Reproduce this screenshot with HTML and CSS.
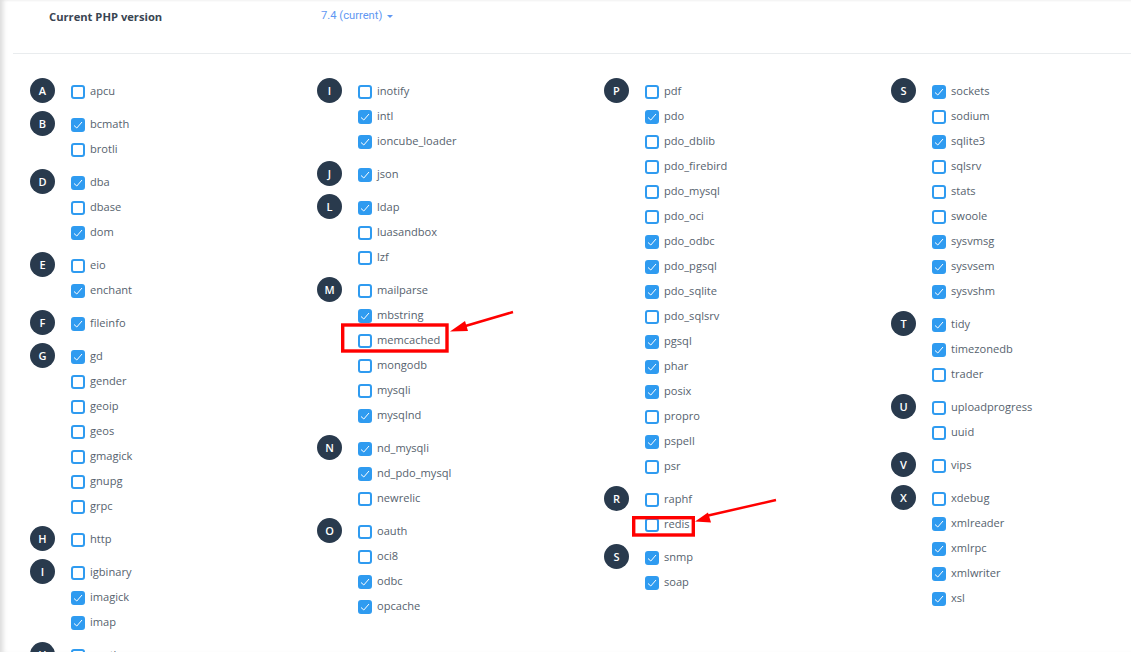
FILE: index.html
```html
<!DOCTYPE html>
<html lang="en">
<head>
<meta charset="utf-8">
<title>PHP extensions</title>
<link rel="stylesheet" href="styles.css">
</head>
<body>
<div class="page">
  <header class="head">
    <span class="head-label">Current PHP version</span>
    <span class="head-value">7.4 (current) <i class="caret"></i></span>
  </header>
  <main class="columns" id="columns"></main>
  <svg class="notes" width="1131" height="652" viewBox="0 0 1131 652" aria-hidden="true">
    <rect x="342.7" y="325" width="104.3" height="26" fill="none" stroke="#f00" stroke-width="3.4"/>
    <rect x="633.7" y="517.7" width="59.6" height="17.3" fill="none" stroke="#f00" stroke-width="3.4"/>
    <path d="M513 312 L462 327" stroke="#f00" stroke-width="2.5" fill="none"/>
    <polygon points="450,331.5 465,321 468,331" fill="#f00"/>
    <path d="M776 500 L706 516" stroke="#f00" stroke-width="2.5" fill="none"/>
    <polygon points="695,521.5 708,512.5 711,522.5" fill="#f00"/>
  </svg>
</div>
<script src="app.js"></script>
</body>
</html>
```
FILE: styles.css
```css
* { box-sizing: border-box; }
html, body { margin: 0; height: 100%; }
body { overflow: hidden; background: #fff; font-family: "Open Sans", "Noto Sans", sans-serif; color: #56626e; }
.page { position: relative; width: 1131px; height: 652px; overflow: hidden; padding-left: 13px; box-shadow: inset 6px 0 5px -3px #dcdcdc, inset 0 2px 2px -1px #f4f4f4; }
.head { display: flex; height: 54px; padding: 9px 0 0 36px; border-bottom: 1px solid #e9ecee; }
.head-label { width: 272px; font-size: 11.2px; line-height: 15px; font-weight: 700; color: #3a4552; }
.head-value { font-family: Roboto, "Open Sans", sans-serif; font-size: 11.2px; line-height: 13px; color: #5f97f2; }
.caret { display: inline-block; width: 0; height: 0; margin-left: 2px; vertical-align: middle; border: 3px solid transparent; border-top: 3px solid #5f97f2; border-bottom: 0; }
.columns { display: grid; grid-template-columns: repeat(4, 287px); padding: 24px 0 0 17px; }
.group { display: flex; margin-bottom: 8px; }
.badge { flex: none; display: flex; align-items: center; justify-content: center; width: 25px; height: 25px; margin-right: 16px; border-radius: 50%; background: #293a4d; color: #fff; font-size: 11px; font-weight: 600; }
.items { display: flex; flex-direction: column; }
.item { display: flex; align-items: center; height: 25px; font-size: 11.1px; }
.box { flex: none; display: flex; align-items: center; justify-content: center; width: 14px; height: 14px; margin: 3px 5px 0 0; border: 2px solid #2f9bf0; border-radius: 3px; background: #fff; }
.box.on { background: #2f9bf0; }
.box svg { display: none; }
.box.on svg { display: block; }
.notes { position: absolute; left: 0; top: 0; pointer-events: none; }
```
FILE: app.js
```js
const data = [
  [["A","apcu"],["B","*bcmath","brotli"],["D","*dba","dbase","*dom"],["E","eio","*enchant"],["F","*fileinfo"],["G","*gd","gender","geoip","geos","gmagick","gnupg","grpc"],["H","http"],["I","igbinary","*imagick","*imap"],["H","oauth"]],
  [["I","inotify","*intl","*ioncube_loader"],["J","*json"],["L","*ldap","luasandbox","lzf"],["M","mailparse","*mbstring","memcached","mongodb","mysqli","*mysqlnd"],["N","*nd_mysqli","*nd_pdo_mysql","newrelic"],["O","oauth","oci8","*odbc","*opcache"]],
  [["P","pdf","*pdo","pdo_dblib","pdo_firebird","pdo_mysql","pdo_oci","*pdo_odbc","*pdo_pgsql","*pdo_sqlite","pdo_sqlsrv","*pgsql","*phar","*posix","propro","*pspell","psr"],["R","raphf","redis"],["S","*snmp","*soap"]],
  [["S","*sockets","sodium","*sqlite3","sqlsrv","stats","swoole","*sysvmsg","*sysvsem","*sysvshm"],["T","*tidy","*timezonedb","trader"],["U","uploadprogress","uuid"],["V","vips"],["X","xdebug","*xmlreader","*xmlrpc","*xmlwriter","*xsl"]]
];
const tick = '<svg width="10" height="10" viewBox="0 0 10 10"><path d="M1 5.5 L3.8 8 L9 2" fill="none" stroke="#fff" stroke-width="1"/></svg>';
document.getElementById("columns").innerHTML = data.map(col =>
  '<section>' + col.map(([letter, ...items]) =>
    '<div class="group"><span class="badge">' + letter + '</span><div class="items">' +
    items.map(n => {
      const on = n[0] === "*";
      return '<label class="item"><span class="box' + (on ? ' on' : '') + '">' + tick + '</span>' + (on ? n.slice(1) : n) + '</label>';
    }).join("") + '</div></div>').join("") + '</section>').join("");
```
